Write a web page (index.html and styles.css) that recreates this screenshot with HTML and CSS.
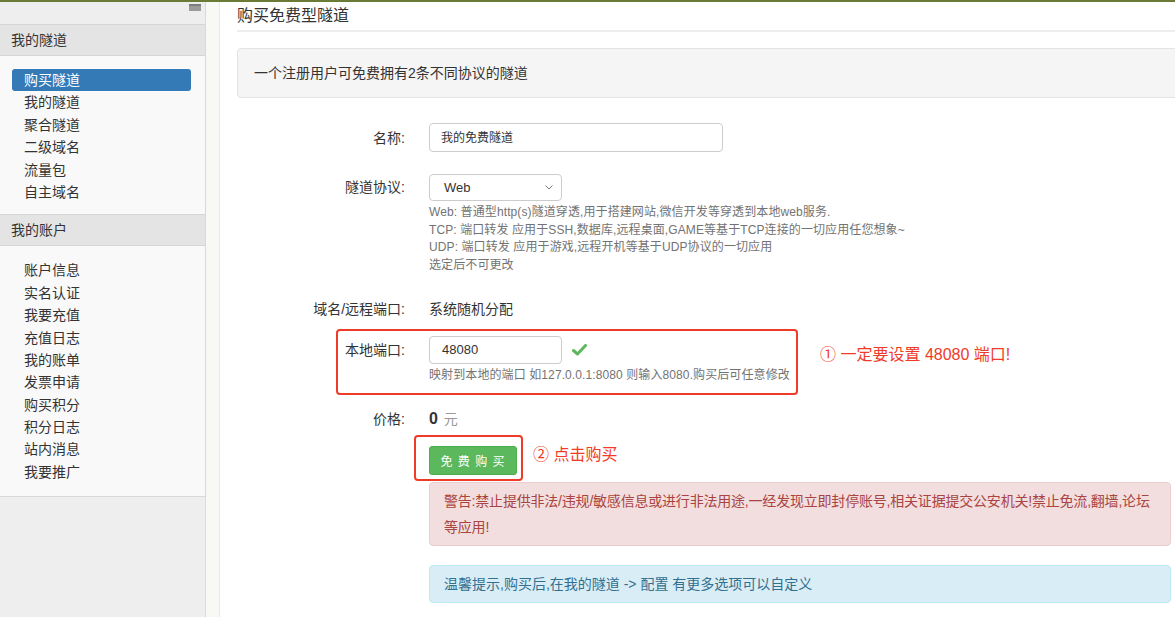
FILE: index.html
```html
<!DOCTYPE html>
<html lang="zh-CN">
<head>
<meta charset="utf-8">
<title>购买免费型隧道</title>
<link rel="stylesheet" href="styles.css">
</head>
<body>
<div class="topbar"></div>
<div class="layout">
  <aside class="sidebar">
    <div class="sb-top"><span class="burger"></span></div>
    <div class="sb-head">我的隧道</div>
    <ul class="sb-list first">
      <li class="active">购买隧道</li>
      <li>我的隧道</li>
      <li>聚合隧道</li>
      <li>二级域名</li>
      <li>流量包</li>
      <li>自主域名</li>
    </ul>
    <div class="sb-head">我的账户</div>
    <ul class="sb-list second">
      <li>账户信息</li>
      <li>实名认证</li>
      <li>我要充值</li>
      <li>充值日志</li>
      <li>我的账单</li>
      <li>发票申请</li>
      <li>购买积分</li>
      <li>积分日志</li>
      <li>站内消息</li>
      <li>我要推广</li>
    </ul>
  </aside>
  <div class="gutter"></div>
  <main class="main">
    <h1 class="page-title">购买免费型隧道</h1>
    <div class="well">一个注册用户可免费拥有2条不同协议的隧道</div>
    <form class="form">
      <div class="row r1">
        <label class="lbl">名称:</label>
        <div class="ctl"><div class="input name-input">我的免费隧道</div></div>
      </div>
      <div class="row r2">
        <label class="lbl">隧道协议:</label>
        <div class="ctl">
          <div class="select"><span>Web</span><svg class="chev" width="8" height="5" viewBox="0 0 8 5"><path d="M0.5 0.5 L4 4 L7.5 0.5" fill="none" stroke="#777" stroke-width="1"/></svg></div>
          <div class="help">Web: 普通型http(s)隧道穿透,用于搭建网站,微信开发等穿透到本地web服务.<br>TCP: 端口转发 应用于SSH,数据库,远程桌面,GAME等基于TCP连接的一切应用任您想象~<br>UDP: 端口转发 应用于游戏,远程开机等基于UDP协议的一切应用<br>选定后不可更改</div>
        </div>
      </div>
      <div class="row r3">
        <label class="lbl">域名/远程端口:</label>
        <div class="ctl static">系统随机分配</div>
      </div>
      <div class="row r4">
        <label class="lbl">本地端口:</label>
        <div class="ctl">
          <div class="port-line">
            <div class="input port-input">48080</div>
            <svg class="check" width="15" height="12" viewBox="0 0 15 12"><path d="M1.5 6.5 L5.5 10 L13.5 1.5" fill="none" stroke="#5cb85c" stroke-width="3" stroke-linejoin="round" stroke-linecap="round"/></svg>
          </div>
          <div class="help one">映射到本地的端口 如127.0.0.1:8080 则输入8080.购买后可任意修改</div>
        </div>
      </div>
      <div class="row r5">
        <label class="lbl">价格:</label>
        <div class="ctl static"><b class="price">0</b> <span class="yuan">元</span></div>
      </div>
      <div class="row r6">
        <div></div>
        <div class="ctl"><button type="button" class="btn">免 费 购 买</button></div>
      </div>
      <div class="alerts">
        <div class="alert danger">警告:禁止提供非法/违规/敏感信息或进行非法用途,一经发现立即封停账号,相关证据提交公安机关!禁止免流,翻墙,论坛等应用!</div>
        <div class="alert info">温馨提示,购买后,在我的隧道 -&gt; 配置 有更多选项可以自定义</div>
      </div>
      <div class="mark box1"></div>
      <div class="note note1">① 一定要设置 48080 端口!</div>
      <div class="mark box2"></div>
      <div class="note note2">② 点击购买</div>
    </form>
  </main>
</div>
</body>
</html>
```
FILE: styles.css
```css
* { box-sizing: border-box; }
html, body { margin: 0; padding: 0; }
body {
  width: 1175px;
  height: 617px;
  overflow: hidden;
  font-family: "Liberation Sans", "Noto Sans CJK SC", sans-serif;
  font-size: 14px;
  color: #333;
  background: #fff;
}
.topbar { height: 2px; background: #6b7b35; }
.layout { display: flex; height: 615px; }

/* sidebar */
.sidebar {
  width: 206px;
  flex: none;
  background: #eeeeee;
  border-right: 1px solid #d9d9d9;
}
.sb-top {
  height: 22px;
  display: flex;
  justify-content: flex-end;
  padding: 2px 4px 0 0;
}
.burger {
  width: 12px;
  height: 7px;
  background: #9b9b9b;
  border-top: 2px solid #7d7d7d;
}
.sb-head {
  height: 32px;
  line-height: 30px;
  padding-left: 11px;
  background: #e4e4e4;
  border-top: 1px solid #d6d6d6;
  border-bottom: 1px solid #d6d6d6;
  font-size: 14px;
}
.sb-list {
  list-style: none;
  margin: 0;
  background: #f9f9f9;
  padding: 0 14px 0 12px;
}
.sb-list.first { padding-top: 13px; padding-bottom: 11px; }
.sb-list.second { padding-top: 13px; padding-bottom: 13px; border-bottom: 1px solid #d9d9d9; }
.sb-list li {
  height: 22.4px;
  line-height: 22px;
  padding-left: 12px;
  font-size: 14px;
  color: #333;
}
.sb-list li.active {
  background: #337ab7;
  color: #fff;
  border-radius: 3px;
}

.gutter {
  width: 14px;
  flex: none;
  background: #f8f8f5;
  border-right: 1px solid #e8e8e4;
}

/* main */
.main {
  flex: 1;
  min-width: 0;
  padding-left: 17px;
  overflow: hidden;
}
.page-title {
  margin: 0;
  font-size: 16px;
  font-weight: normal;
  line-height: 26px;
  padding-top: 1px;
  height: 30px;
  border-bottom: 2px solid #eeeeee;
  color: #333;
}
.well {
  margin-top: 16px;
  margin-right: -10px;
  height: 50px;
  line-height: 48px;
  padding-left: 16px;
  background: #f5f5f5;
  border: 1px solid #e3e3e3;
  border-radius: 4px;
  font-size: 14px;
}

.form {
  position: relative;
  padding-top: 25px;
  padding-right: 4px;
}
.row {
  display: grid;
  grid-template-columns: 168px 1fr;
  column-gap: 24px;
  align-items: start;
}
.lbl {
  text-align: right;
  font-size: 14px;
  color: #333;
}
.r1 { height: 29px; }
.r1 .lbl { line-height: 31px; }
.r2 { margin-top: 22px; }
.r2 .lbl { line-height: 27px; }
.r3 { margin-top: 21px; }
.r3 .lbl, .r3 .ctl { line-height: 28px; }
.r4 { margin-top: 13px; }
.r4 .lbl { line-height: 28px; }
.r5 { margin-top: 21px; }
.r5 .lbl, .r5 .ctl { line-height: 28px; }
.r6 { margin-top: 13px; }

.input {
  border: 1px solid #cccccc;
  border-radius: 4px;
  background: #fff;
  padding-left: 11px;
  color: #333;
}
.name-input {
  width: 294px;
  height: 29px;
  line-height: 29px;
  font-size: 12px;
}
.port-line { display: flex; align-items: center; }
.port-input {
  width: 133px;
  height: 28px;
  line-height: 26px;
  font-size: 13px;
  padding-left: 12px;
}
.check { margin-left: 10px; margin-top: -1px; }
.select {
  width: 133px;
  height: 27px;
  border: 1px solid #cccccc;
  border-radius: 4px;
  display: flex;
  align-items: center;
  justify-content: space-between;
  padding: 0 8px 0 14px;
  font-size: 13px;
  color: #333;
}
.help {
  margin-top: 3px;
  font-size: 12px;
  line-height: 17.5px;
  letter-spacing: 0.1px;
  color: #737373;
}
.help.one { line-height: 17px; }
.static { font-size: 14px; color: #333; }
.price { font-size: 16px; font-weight: bold; }
.yuan { color: #999; margin-left: 2px; }

.btn {
  width: 88px;
  height: 29px;
  border: 1px solid #4cae4c;
  border-radius: 3px;
  background: #5cb85c;
  color: #fff;
  font-family: "Liberation Sans", "Noto Sans CJK SC", sans-serif;
  font-size: 12px;
  letter-spacing: 1px;
  padding: 0;
}

.alerts { margin-left: 192px; }
.alert {
  border-radius: 4px;
  border: 1px solid transparent;
  padding: 5px 14px;
  line-height: 26px;
  font-size: 14px;
}
.alert.danger {
  margin-top: 7px;
  background: #f2dede;
  border-color: #ebccd1;
  color: #a94442;
  letter-spacing: -0.2px;
}
.alert.info {
  margin-top: 19px;
  background: #d9edf7;
  border-color: #bce8f1;
  color: #31708f;
}

/* annotation overlays */
.mark {
  position: absolute;
  border: 2px solid #ef3b27;
  border-radius: 4px;
}
.box1 { left: 99px; top: 231px; width: 462px; height: 66px; }
.box2 { left: 177px; top: 337px; width: 109px; height: 46px; }
.note {
  position: absolute;
  color: #ef3b27;
  font-size: 16px;
  line-height: 20px;
  white-space: nowrap;
}
.note1 { left: 583px; top: 247px; }
.note2 { left: 296px; top: 347px; }
```
